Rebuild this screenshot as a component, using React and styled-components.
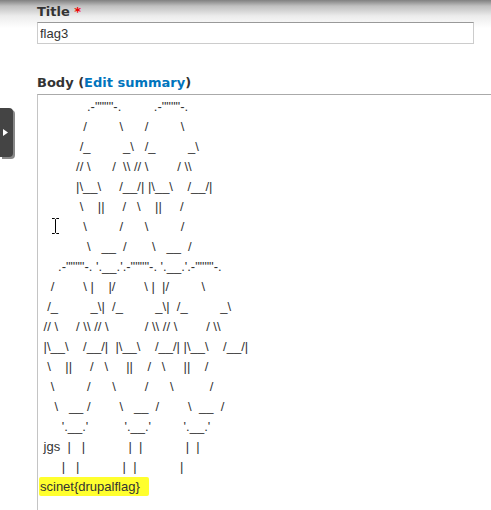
import React from "react";
import styled, { createGlobalStyle } from "styled-components";

const GlobalStyle = createGlobalStyle`
  html, body {
    margin: 0;
    padding: 0;
    height: 100%;
    overflow: hidden;
  }
  body {
    background: linear-gradient(#808080 0, #c0c0c0 6px, #ececec 16px, #fff 28px) no-repeat;
    font-family: "Liberation Sans", Arial, sans-serif;
  }
`;

// each line is a list of segments: a number means that many spaces
const ART = [
  [13, '.-""""-.', 9, '.-""""-.'],
  [12, "/", 9, "\\", 6, "/", 9, "\\"],
  [11, "/_", 9, "_\\", 3, "/_", 9, "_\\"],
  [10, "//", 1, "\\", 6, "/", 2, "\\\\", 1, "//", 1, "\\", 8, "/", 1, "\\\\"],
  [10, "|\\__\\", 5, "/__/|", 1, "|\\__\\", 4, "/__/|"],
  [11, "\\", 4, "||", 5, "/", 3, "\\", 4, "||", 5, "/"],
  [12, "\\", 9, "/", 6, "\\", 9, "/"],
  [13, "\\", 3, "__", 2, "/", 7, "\\", 3, "__", 2, "/"],
  [5, '.-""""-.', 1, "'.__.'", '.-""""-.', 1, "'.__.'", '.-""""-.'],
  [3, "/", 8, "\\", 1, "|", 4, "|/", 8, "\\", 1, "|", 2, "|/", 9, "\\"],
  [2, "/_", 9, "_\\|", 2, "/_", 9, "_\\|", 2, "/_", 9, "_\\"],
  [1, "//", 1, "\\", 5, "/ \\\\ // \\", 10, "/ \\\\ // \\", 8, "/ \\\\"],
  [1, "|\\__\\", 4, "/__/|", 2, "|\\__\\", 4, "/__/|", 1, "|\\__\\", 4, "/__/|"],
  [2, "\\", 4, "||", 5, "/", 3, "\\", 5, "||", 4, "/", 3, "\\", 5, "||", 4, "/"],
  [3, "\\", 9, "/", 6, "\\", 8, "/", 6, "\\", 10, "/"],
  [4, "\\", 3, "__", 1, "/", 8, "\\", 3, "__", 2, "/", 8, "\\", 2, "__", 2, "/"],
  [6, "'.__.'", 10, "'.__.'", 9, "'.__.'"],
  [1, "jgs", 2, "|", 3, "|", 12, "|", 2, "|", 12, "|", 2, "|"],
  [6, "|", 3, "|", 12, "|", 2, "|", 12, "|"]
];

const toText = segs =>
  segs.map(s => (typeof s === "number" ? " ".repeat(s) : s)).join("");

const BEAM =
  "M1 1.5 H3.5 L4.5 2.5 L5.5 1.5 H8 M4.5 2.5 V15.5 M1 16.5 H3.5 L4.5 15.5 L5.5 16.5 H8";

export default function App() {
  return (
    <>
      <GlobalStyle />
      <SideTab>
        <svg width="5" height="7" viewBox="0 0 5 7">
          <path d="M0 0 L5 3.5 L0 7 Z" fill="#fff" />
        </svg>
      </SideTab>
      <Page>
        <Label>
          Title <Required>*</Required>
        </Label>
        <TextInput defaultValue="flag3" />
        <Label spaced>
          Body (<Link href="#">Edit summary</Link>)
        </Label>
        <Editor>
          <Content>
            {ART.map((segs, i) => (
              <Line key={i}>{toText(segs)}</Line>
            ))}
            <Line>
              <Marked>scinet{"{drupalflag}"}</Marked>
            </Line>
          </Content>
          <Cursor width="9" height="18" viewBox="0 0 9 18">
            <path d={BEAM} stroke="#fff" strokeWidth="3" fill="none" />
            <path d={BEAM} stroke="#000" strokeWidth="1" fill="none" />
          </Cursor>
        </Editor>
      </Page>
    </>
  );
}

const Page = styled.div`
  padding: 4px 0 0 37px;
  display: flex;
  flex-direction: column;
  align-items: flex-start;
`;

const Label = styled.label`
  font-family: "DejaVu Sans", Verdana, sans-serif;
  font-weight: bold;
  font-size: 13px;
  line-height: 16px;
  color: #333;
  margin-top: ${p => (p.spaced ? "31px" : "0")};
  margin-bottom: ${p => (p.spaced ? "3px" : "2px")};
`;

const Required = styled.span`
  color: #e00;
`;

const Link = styled.a`
  color: #0074bd;
  text-decoration: none;
`;

const TextInput = styled.input`
  box-sizing: border-box;
  width: 437px;
  height: 22px;
  margin: 0;
  padding: 0 2px;
  border: 1px solid #ccc;
  border-top-color: #999;
  font-family: "Liberation Sans", Arial, sans-serif;
  font-size: 13px;
  color: #333;
  outline: none;
`;

const Editor = styled.div`
  position: relative;
  align-self: stretch;
  height: 430px;
  border-top: 1px solid #aaa;
  border-left: 1px solid #c4c4c4;
  background: #fff;
`;

const Content = styled.div`
  padding: 2px 0 0 2px;
  font-family: "Liberation Sans", Arial, sans-serif;
  font-size: 13px;
  line-height: 20px;
  color: #333;
`;

const Line = styled.div`
  height: 20px;
  white-space: pre;
`;

const Marked = styled.span`
  display: inline-block;
  height: 19px;
  line-height: 19px;
  margin-left: -1px;
  padding: 0 9px 0 1px;
  background: #ffff2e;
  border-radius: 2px;
`;

const Cursor = styled.svg`
  position: absolute;
  left: 13px;
  top: 122px;
`;

const SideTab = styled.div`
  position: absolute;
  left: 0;
  top: 108px;
  width: 13px;
  height: 49px;
  background: #444;
  border-radius: 0 4px 4px 0;
  box-shadow: 2px 2px 0 #888;
  display: flex;
  align-items: center;
  padding-left: 3px;
  box-sizing: border-box;
  z-index: 1;
`;
